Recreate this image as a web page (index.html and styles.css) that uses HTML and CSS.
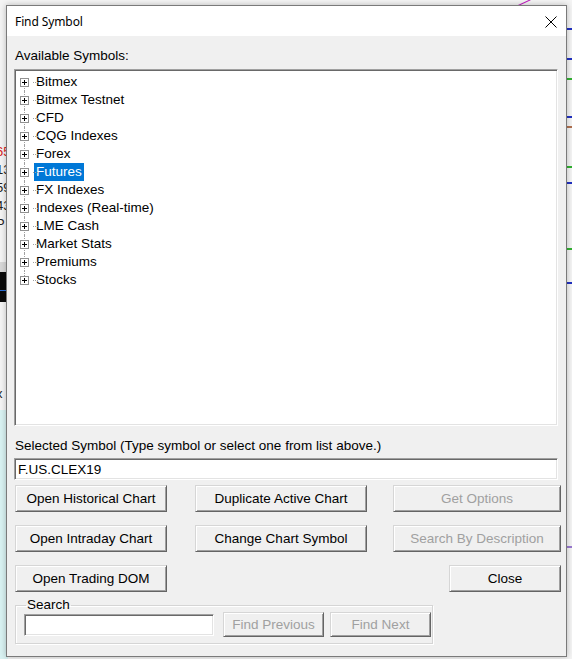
FILE: index.html
```html
<!DOCTYPE html>
<html lang="en">
<head>
    <meta charset="UTF-8">
    <title>Find Symbol</title>
    <link rel="stylesheet" href="styles.css">
</head>
<body>
    <!-- chart window behind the dialog -->
    <div class="desk">
        <span class="frag red" style="top:144px">65</span>
        <span class="frag" style="top:162px">13</span>
        <span class="frag" style="top:180px">59</span>
        <span class="frag" style="top:198px">43</span>
        <span class="frag" style="top:216px">P</span>
        <div class="dark-band"></div>
        <span class="frag" style="top:386px">x</span>
        <div class="cyan-pane"></div>
        <div class="line magenta"></div>
        <div class="mark blue" style="top:28px"></div>
        <div class="mark blue" style="top:58px"></div>
        <div class="mark green" style="top:78px"></div>
        <div class="mark blue" style="top:116px"></div>
        <div class="mark brown" style="top:126px"></div>
        <div class="mark green" style="top:166px"></div>
        <div class="mark blue" style="top:182px"></div>
        <div class="mark green" style="top:248px"></div>
        <div class="mark blue" style="top:282px"></div>
        <div class="mark violet" style="top:546px"></div>
    </div>

    <div class="dialog">
        <div class="titlebar">
            <span class="title">Find Symbol</span>
            <span class="close-x">
                <svg width="12" height="12" viewBox="0 0 12 12"><path d="M0.5 0.5 L11.5 11.5 M11.5 0.5 L0.5 11.5" stroke="#000" stroke-width="1" fill="none"/></svg>
            </span>
        </div>
        <div class="content">
            <div class="label label-top">Available Symbols:</div>
            <div class="tree">
                <ul class="nodes">
                    <li><i class="plus"></i><span class="name">Bitmex</span></li>
                    <li><i class="plus"></i><span class="name">Bitmex Testnet</span></li>
                    <li><i class="plus"></i><span class="name">CFD</span></li>
                    <li><i class="plus"></i><span class="name">CQG Indexes</span></li>
                    <li><i class="plus"></i><span class="name">Forex</span></li>
                    <li><i class="plus"></i><span class="name selected">Futures</span></li>
                    <li><i class="plus"></i><span class="name">FX Indexes</span></li>
                    <li><i class="plus"></i><span class="name">Indexes (Real-time)</span></li>
                    <li><i class="plus"></i><span class="name">LME Cash</span></li>
                    <li><i class="plus"></i><span class="name">Market Stats</span></li>
                    <li><i class="plus"></i><span class="name">Premiums</span></li>
                    <li class="last"><i class="plus"></i><span class="name">Stocks</span></li>
                </ul>
            </div>
            <div class="label label-sel">Selected Symbol (Type symbol or select one from list above.)</div>
            <div class="field symbol-field">F.US.CLEX19</div>

            <div class="buttons">
                <div class="row">
                    <button class="btn col1">Open Historical Chart</button>
                    <button class="btn col2">Duplicate Active Chart</button>
                    <button class="btn col3" disabled>Get Options</button>
                </div>
                <div class="row">
                    <button class="btn col1">Open Intraday Chart</button>
                    <button class="btn col2">Change Chart Symbol</button>
                    <button class="btn col3" disabled>Search By Description</button>
                </div>
                <div class="row">
                    <button class="btn col1">Open Trading DOM</button>
                    <button class="btn close-btn">Close</button>
                </div>
            </div>

            <fieldset class="search">
                <legend>Search</legend>
                <div class="field search-field"></div>
                <button class="btn small" disabled>Find Previous</button>
                <button class="btn small" disabled>Find Next</button>
            </fieldset>
        </div>
    </div>
</body>
</html>
```

FILE: styles.css
```css
* {
    box-sizing: border-box;
}
body {
    margin: 0;
    width: 572px;
    height: 659px;
    overflow: hidden;
    background: #f4f4f4;
    font: 13px "Liberation Sans", Arial, sans-serif;
    color: #000;
    position: relative;
}

/* window behind */
.desk {
    position: absolute;
    left: 0;
    top: 0;
    width: 572px;
    height: 659px;
}
.frag {
    position: absolute;
    left: -4px;
    font-size: 13px;
    color: #222;
}
.frag.red {
    color: #d62020;
}
.dark-band {
    position: absolute;
    left: 0;
    top: 262px;
    width: 8px;
    height: 40px;
    background: #0a0a0a;
    border-top: 10px solid #d8d8d8;
}
.dark-band::after {
    content: "";
    position: absolute;
    left: 0;
    top: 18px;
    width: 8px;
    height: 1px;
    background: #2a6fd8;
}
.cyan-pane {
    position: absolute;
    left: 0;
    top: 410px;
    width: 8px;
    height: 249px;
    background: #d9f2f2;
}
.line {
    position: absolute;
}
.line.magenta {
    left: 516px;
    top: 6px;
    width: 16px;
    height: 1px;
    background: #c020c0;
    transform: rotate(-25deg);
    transform-origin: left;
}
.mark {
    position: absolute;
    left: 566px;
    width: 6px;
    height: 2px;
}
.mark.blue { background: #2030c0; }
.mark.green { background: #30b030; }
.mark.brown { background: #b07050; }
.mark.violet { background: #9a7ad0; }

/* dialog */
.dialog {
    position: relative;
    margin: 5px 0 0 6px;
    width: 561px;
    height: 652px;
    border: 1px solid #7a7a7a;
    background: #f0f0f0;
    box-shadow: 0 0 6px rgba(0, 0, 0, 0.25);
}
.titlebar {
    height: 30px;
    background: #fff;
    display: flex;
    align-items: center;
    justify-content: space-between;
    padding: 0 9px 0 8px;
}
.title {
    font: 12px "Noto Sans", "Open Sans", sans-serif;
    letter-spacing: -0.1px;
}
.close-x {
    display: flex;
    margin-top: 1px;
}

.content {
    padding: 0 0 0 7px;
}
.label {
    font-size: 13.5px;
    line-height: 15px;
}
.label-top {
    padding: 12px 0 6px 1px;
}

/* sunken boxes */
.tree,
.field {
    background: #fff;
    border-top: 1px solid #a0a0a0;
    border-left: 1px solid #a0a0a0;
    border-right: 1px solid #fff;
    border-bottom: 1px solid #fff;
    box-shadow: inset 1px 1px 0 #696969, inset -1px -1px 0 #e3e3e3;
}
.tree {
    width: 544px;
    height: 357px;
    padding: 3px 0 0 4px;
}
.nodes {
    list-style: none;
    margin: 0;
    padding: 0;
}
.nodes li {
    position: relative;
    height: 18px;
    display: flex;
    align-items: center;
}
/* dotted tree lines */
.nodes li::before {
    content: "";
    position: absolute;
    left: 5px;
    top: 0;
    height: 18px;
    border-left: 1px dotted #a0a0a0;
}
.nodes li:first-child::before {
    top: 9px;
    height: 9px;
}
.nodes li.last::before {
    height: 9px;
}
.nodes li::after {
    content: "";
    position: absolute;
    left: 14px;
    top: 9px;
    width: 5px;
    border-top: 1px dotted #a0a0a0;
}
.plus {
    position: relative;
    z-index: 1;
    width: 9px;
    height: 9px;
    margin-left: 1px;
    border: 1px solid #919191;
    background: #fff;
}
.plus::before,
.plus::after {
    content: "";
    position: absolute;
    background: #000;
}
.plus::before {
    left: 1px;
    top: 3px;
    width: 5px;
    height: 1px;
}
.plus::after {
    left: 3px;
    top: 1px;
    width: 1px;
    height: 5px;
}
.name {
    margin-left: 5px;
    padding: 0 2px 0 2px;
    line-height: 18px;
    font-size: 13.5px;
}
.name.selected {
    background: #0078d7;
    color: #fff;
}

.label-sel {
    padding: 12px 0 5px 1px;
}
.symbol-field {
    width: 544px;
    height: 22px;
    padding: 2px 0 0 3px;
    font-size: 13.5px;
    line-height: 17px;
}

/* raised buttons */
.btn {
    font: 13.5px "Liberation Sans", Arial, sans-serif;
    color: #000;
    background: #f0f0f0;
    border-top: 1px solid #d6d6d6;
    border-left: 1px solid #d6d6d6;
    border-right: 1px solid #646464;
    border-bottom: 1px solid #646464;
    box-shadow: inset 1px 1px 0 #fff, inset -1px -1px 0 #a0a0a0;
    height: 27px;
    padding: 0;
}
.btn:disabled {
    color: #a0a0a0;
}
.buttons {
    padding-top: 5px;
    display: flex;
    flex-direction: column;
    gap: 13px;
}
.row {
    display: flex;
    padding-left: 1px;
}
.col1 {
    width: 152px;
}
.col2 {
    width: 172px;
    margin-left: 28px;
}
.col3 {
    width: 168px;
    margin-left: 26px;
}
.close-btn {
    width: 112px;
    margin-left: 282px;
}

/* search group */
.search {
    margin: 7px 0 0 1px;
    width: 418px;
    height: 45px;
    padding: 0 0 0 8px;
    border: 1px solid #d5d5d5;
    box-shadow: 1px 1px 0 #fff, inset 1px 1px 0 #fff;
    display: flex;
    align-items: flex-start;
}
.search legend {
    padding: 0 1px;
    margin-left: 2px;
    font-size: 13.5px;
    line-height: 12px;
}
.search-field {
    width: 190px;
    height: 22px;
    margin-top: 3px;
}
.btn.small {
    width: 101px;
    height: 25px;
    margin-top: 1px;
    margin-left: 9px;
}
.btn.small + .btn.small {
    margin-left: 6px;
}
```
